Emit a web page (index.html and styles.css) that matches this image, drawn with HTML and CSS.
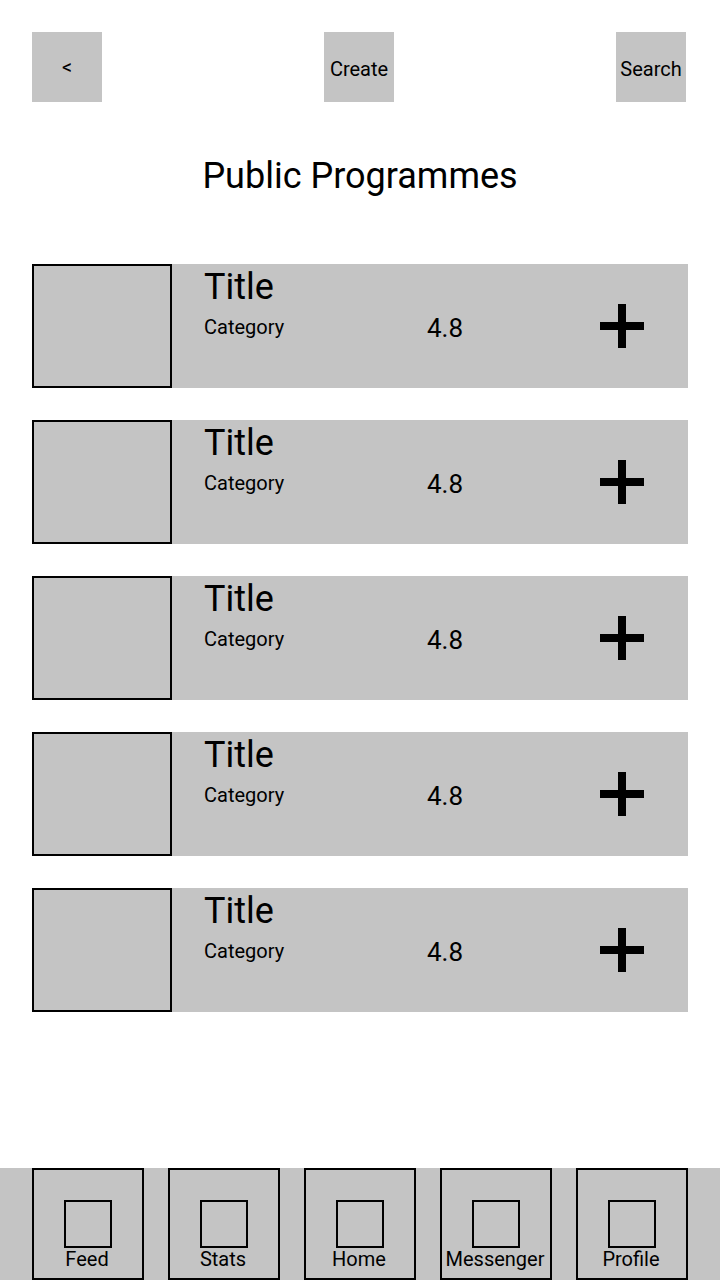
FILE: index.html
```html
<!DOCTYPE html>
<html lang="en">
<head>
    <meta charset="UTF-8">
    <meta name="viewport" content="width=device-width, initial-scale=1.0">
    <title>Public Programmes</title>
    <link rel="stylesheet" href="styles.css">
</head>
<body>
    <div class="topBar">
        <button class="topBtn">&lt;</button>
        <button class="topBtn">Create</button>
        <button class="topBtn">Search</button>
    </div>

    <h1 class="pageTitle">Public Programmes</h1>

    <div class="programmeList">
        <div class="programme">
            <div class="thumb"></div>
            <div class="info">
                <div class="progTitle">Title</div>
                <div class="meta">
                    <span class="category">Category</span>
                    <span class="rating">4.8</span>
                </div>
            </div>
            <svg class="addIcon" width="44" height="44" viewBox="0 0 44 44"><rect x="18" y="0" width="8" height="44"/><rect x="0" y="18" width="44" height="8"/></svg>
        </div>
        <div class="programme">
            <div class="thumb"></div>
            <div class="info">
                <div class="progTitle">Title</div>
                <div class="meta">
                    <span class="category">Category</span>
                    <span class="rating">4.8</span>
                </div>
            </div>
            <svg class="addIcon" width="44" height="44" viewBox="0 0 44 44"><rect x="18" y="0" width="8" height="44"/><rect x="0" y="18" width="44" height="8"/></svg>
        </div>
        <div class="programme">
            <div class="thumb"></div>
            <div class="info">
                <div class="progTitle">Title</div>
                <div class="meta">
                    <span class="category">Category</span>
                    <span class="rating">4.8</span>
                </div>
            </div>
            <svg class="addIcon" width="44" height="44" viewBox="0 0 44 44"><rect x="18" y="0" width="8" height="44"/><rect x="0" y="18" width="44" height="8"/></svg>
        </div>
        <div class="programme">
            <div class="thumb"></div>
            <div class="info">
                <div class="progTitle">Title</div>
                <div class="meta">
                    <span class="category">Category</span>
                    <span class="rating">4.8</span>
                </div>
            </div>
            <svg class="addIcon" width="44" height="44" viewBox="0 0 44 44"><rect x="18" y="0" width="8" height="44"/><rect x="0" y="18" width="44" height="8"/></svg>
        </div>
        <div class="programme">
            <div class="thumb"></div>
            <div class="info">
                <div class="progTitle">Title</div>
                <div class="meta">
                    <span class="category">Category</span>
                    <span class="rating">4.8</span>
                </div>
            </div>
            <svg class="addIcon" width="44" height="44" viewBox="0 0 44 44"><rect x="18" y="0" width="8" height="44"/><rect x="0" y="18" width="44" height="8"/></svg>
        </div>
    </div>

    <div class="navBar">
        <div class="navItem"><div class="navIcon"></div><span class="navLabel">Feed</span></div>
        <div class="navItem"><div class="navIcon"></div><span class="navLabel">Stats</span></div>
        <div class="navItem"><div class="navIcon"></div><span class="navLabel">Home</span></div>
        <div class="navItem"><div class="navIcon"></div><span class="navLabel">Messenger</span></div>
        <div class="navItem"><div class="navIcon"></div><span class="navLabel">Profile</span></div>
    </div>
</body>
</html>
```

FILE: styles.css
```css
body { margin: 0; min-height: 100vh; display: flex; flex-direction: column; font-family: Roboto, "Liberation Sans", sans-serif; color: #000; background: #fff; }

.topBar { display: flex; justify-content: space-between; padding: 32px 34px 0 32px; }
.topBtn { width: 70px; height: 70px; padding: 4px 0 0; border: none; background: #c4c4c4; font-family: inherit; font-size: 20px; color: #000; display: flex; align-items: center; justify-content: center; }
.topBtn:first-child { padding-top: 0; }

.pageTitle { margin: 53px 0 0; text-align: center; font-size: 36px; font-weight: 400; line-height: 42px; }

.programmeList { display: flex; flex-direction: column; gap: 32px; margin: 67px 32px 0; }
.programme { display: flex; height: 124px; background: #c4c4c4; }
.thumb { width: 140px; height: 124px; box-sizing: border-box; border: 2px solid #000; flex-shrink: 0; }
.info { flex: 1; padding: 2px 0 0 32px; }
.progTitle { font-size: 36px; line-height: 42px; }
.meta { display: flex; align-items: flex-start; margin-top: 5px; }
.category { width: 223px; font-size: 20px; margin-top: 2px; }
.rating { font-size: 26px; }
.addIcon { align-self: center; margin-right: 44px; fill: #000; }

.navBar { margin-top: auto; display: flex; gap: 24px; padding: 0 32px; background: #c4c4c4; }
.navItem { width: 112px; height: 112px; box-sizing: border-box; border: 2px solid #000; display: flex; flex-direction: column; align-items: center; padding-top: 30px; }
.navIcon { width: 48px; height: 48px; box-sizing: border-box; border: 2px solid #000; }
.navLabel { font-size: 20px; margin: -1px 2px 0 0; }
```
